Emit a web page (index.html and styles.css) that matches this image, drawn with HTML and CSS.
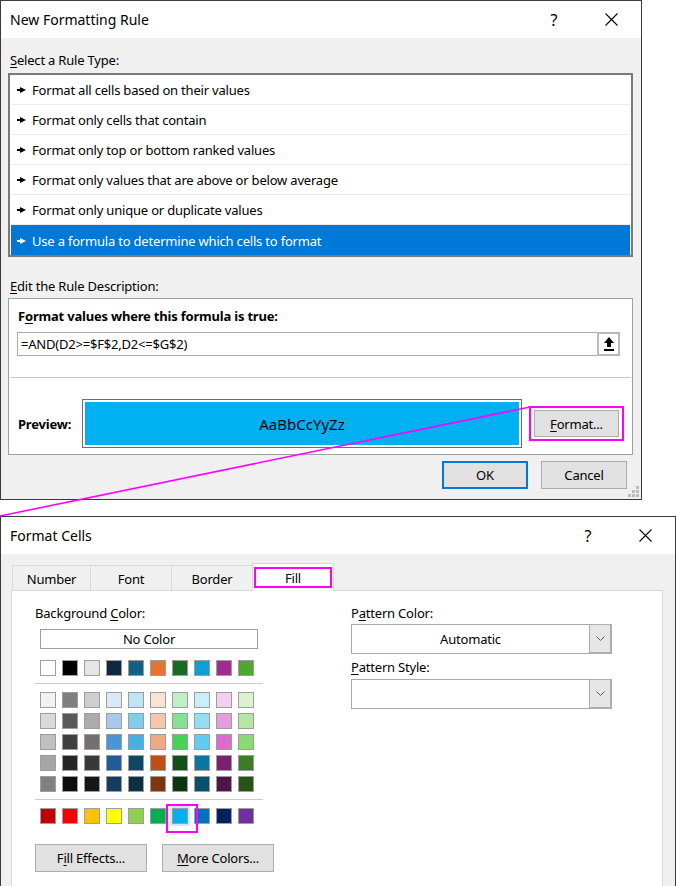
FILE: index.html
```html
<!DOCTYPE html>
<html lang="en">
<head>
<meta charset="utf-8">
<title>New Formatting Rule</title>
<link rel="stylesheet" href="styles.css">
</head>
<body>
<div class="page">
  <section class="dlg dlg-rule">
    <header class="titlebar">
      <span class="title">New Formatting Rule</span>
      <span class="tb-help">?</span>
      <span class="tb-close"><svg width="13" height="13" viewBox="0 0 13 13"><path d="M0.5 0.5L12.5 12.5M12.5 0.5L0.5 12.5" stroke="#000" stroke-width="1.1" fill="none"/></svg></span>
    </header>
    <div class="dlg-body">
      <div class="lbl"><u>S</u>elect a Rule Type:</div>
      <ul class="rule-list">
        <li class="rule"><svg class="arr" viewBox="0 0 9 6"><rect x="0" y="2" width="4" height="2"/><polygon points="3,0 9,3 3,6"/></svg><span>Format all cells based on their values</span></li>
        <li class="rule"><svg class="arr" viewBox="0 0 9 6"><rect x="0" y="2" width="4" height="2"/><polygon points="3,0 9,3 3,6"/></svg><span>Format only cells that contain</span></li>
        <li class="rule"><svg class="arr" viewBox="0 0 9 6"><rect x="0" y="2" width="4" height="2"/><polygon points="3,0 9,3 3,6"/></svg><span>Format only top or bottom ranked values</span></li>
        <li class="rule"><svg class="arr" viewBox="0 0 9 6"><rect x="0" y="2" width="4" height="2"/><polygon points="3,0 9,3 3,6"/></svg><span>Format only values that are above or below average</span></li>
        <li class="rule"><svg class="arr" viewBox="0 0 9 6"><rect x="0" y="2" width="4" height="2"/><polygon points="3,0 9,3 3,6"/></svg><span>Format only unique or duplicate values</span></li>
        <li class="rule sel"><svg class="arr" viewBox="0 0 9 6"><rect x="0" y="2" width="4" height="2"/><polygon points="3,0 9,3 3,6"/></svg><span>Use a formula to determine which cells to format</span></li>
      </ul>
      <div class="lbl lbl-edit"><u>E</u>dit the Rule Description:</div>
      <div class="desc">
        <div class="desc-head">F<u>o</u>rmat values where this formula is true:</div>
        <div class="formula">
          <span class="ftext">=AND(D2&gt;=$F$2,D2&lt;=$G$2)</span>
          <span class="collapse-btn"><svg width="10" height="14" viewBox="0 0 10 14"><polygon points="5,0 10,6 7,6 7,10 3,10 3,6 0,6"/><rect x="0" y="12" width="10" height="2"/></svg></span>
        </div>
        <div class="sep"></div>
        <div class="preview-row">
          <span class="preview-lbl">Preview:</span>
          <div class="preview-frame"><div class="preview-fill">AaBbCcYyZz</div></div>
          <div class="hl hl-format"><button class="btn btn-format"><u>F</u>ormat...</button></div>
        </div>
      </div>
      <div class="actions">
        <button class="btn btn-ok">OK</button>
        <button class="btn">Cancel</button>
      </div>
    </div>
    <span class="grip">
      <i class="d d1"></i><i class="d d2"></i><i class="d d3"></i><i class="d d4"></i><i class="d d5"></i><i class="d d6"></i>
    </span>
  </section>

  <section class="dlg dlg-cells">
    <header class="titlebar">
      <span class="title">Format Cells</span>
      <span class="tb-help">?</span>
      <span class="tb-close"><svg width="13" height="13" viewBox="0 0 13 13"><path d="M0.5 0.5L12.5 12.5M12.5 0.5L0.5 12.5" stroke="#000" stroke-width="1.1" fill="none"/></svg></span>
    </header>
    <div class="cells-body">
      <div class="tabs">
        <span class="tab tab-number">Number</span>
        <span class="tab">Font</span>
        <span class="tab">Border</span>
        <span class="tab tab-sel"><span class="tab-hl">Fill</span></span>
      </div>
      <div class="panel">
        <div class="col-left">
          <div class="lbl2">Background <u>C</u>olor:</div>
          <div class="nocolor">No Color</div>
          <div class="sw-row sw-first">
            <i class="sw" style="background:#ffffff"></i><i class="sw" style="background:#000000"></i><i class="sw" style="background:#e7e6e6"></i><i class="sw" style="background:#0e2841"></i><i class="sw" style="background:#156082"></i><i class="sw" style="background:#e97132"></i><i class="sw" style="background:#196b24"></i><i class="sw" style="background:#0f9ed5"></i><i class="sw" style="background:#a02b93"></i><i class="sw" style="background:#4ea72e"></i>
          </div>
          <div class="sw-sep"></div>
          <div class="sw-grid">
            <div class="sw-row">
              <i class="sw" style="background:#f2f2f2"></i><i class="sw" style="background:#7f7f7f"></i><i class="sw" style="background:#d0cece"></i><i class="sw" style="background:#dae9f8"></i><i class="sw" style="background:#c0e4f5"></i><i class="sw" style="background:#fbe2d5"></i><i class="sw" style="background:#c1f0c8"></i><i class="sw" style="background:#caeefb"></i><i class="sw" style="background:#f2ceef"></i><i class="sw" style="background:#daf2d0"></i>
            </div>
            <div class="sw-row">
              <i class="sw" style="background:#d9d9d9"></i><i class="sw" style="background:#595959"></i><i class="sw" style="background:#aeaaaa"></i><i class="sw" style="background:#a6c9ec"></i><i class="sw" style="background:#83cceb"></i><i class="sw" style="background:#f7c7ac"></i><i class="sw" style="background:#84e291"></i><i class="sw" style="background:#95dcf7"></i><i class="sw" style="background:#e59edd"></i><i class="sw" style="background:#b5e6a2"></i>
            </div>
            <div class="sw-row">
              <i class="sw" style="background:#bfbfbf"></i><i class="sw" style="background:#404040"></i><i class="sw" style="background:#747070"></i><i class="sw" style="background:#4d93d9"></i><i class="sw" style="background:#44b3e1"></i><i class="sw" style="background:#f1a983"></i><i class="sw" style="background:#47d359"></i><i class="sw" style="background:#61cbf3"></i><i class="sw" style="background:#d86dcd"></i><i class="sw" style="background:#8ed973"></i>
            </div>
            <div class="sw-row">
              <i class="sw" style="background:#a6a6a6"></i><i class="sw" style="background:#262626"></i><i class="sw" style="background:#3a3838"></i><i class="sw" style="background:#215c98"></i><i class="sw" style="background:#0f4761"></i><i class="sw" style="background:#c04f15"></i><i class="sw" style="background:#124f1a"></i><i class="sw" style="background:#0b76a0"></i><i class="sw" style="background:#782170"></i><i class="sw" style="background:#3b7d23"></i>
            </div>
            <div class="sw-row">
              <i class="sw" style="background:#808080"></i><i class="sw" style="background:#0d0d0d"></i><i class="sw" style="background:#161616"></i><i class="sw" style="background:#153d64"></i><i class="sw" style="background:#0a2f41"></i><i class="sw" style="background:#7e350e"></i><i class="sw" style="background:#0c3511"></i><i class="sw" style="background:#074f6a"></i><i class="sw" style="background:#501549"></i><i class="sw" style="background:#275317"></i>
            </div>
          </div>
          <div class="sw-sep sw-sep2"></div>
          <div class="sw-row sw-std">
            <i class="sw" style="background:#c00000"></i><i class="sw" style="background:#ff0000"></i><i class="sw" style="background:#ffc000"></i><i class="sw" style="background:#ffff00"></i><i class="sw" style="background:#92d050"></i><i class="sw" style="background:#00b050"></i><i class="sw sw-picked" style="background:#00b0f0"></i><i class="sw" style="background:#0070c0"></i><i class="sw" style="background:#002060"></i><i class="sw" style="background:#7030a0"></i>
          </div>
          <div class="fill-btns">
            <button class="btn btn-wide">F<u>i</u>ll Effects...</button>
            <button class="btn btn-wide"><u>M</u>ore Colors...</button>
          </div>
        </div>
        <div class="col-right">
          <div class="lbl2">P<u>a</u>ttern Color:</div>
          <div class="dropdown">
            <span class="dd-text">Automatic</span>
            <span class="dd-arrow"><svg width="9" height="5" viewBox="0 0 9 5"><path d="M0.5 0.5L4.5 4.5L8.5 0.5" stroke="#5a5a5a" fill="none"/></svg></span>
          </div>
          <div class="lbl2 lbl-style"><u>P</u>attern Style:</div>
          <div class="dropdown dropdown-2">
            <span class="dd-text"></span>
            <span class="dd-arrow"><svg width="9" height="5" viewBox="0 0 9 5"><path d="M0.5 0.5L4.5 4.5L8.5 0.5" stroke="#5a5a5a" fill="none"/></svg></span>
          </div>
        </div>
      </div>
    </div>
  </section>

  <svg class="connector" width="676" height="886" viewBox="0 0 676 886"><line x1="0" y1="516" x2="530" y2="407" stroke="#ff00ff" stroke-width="1.6"/></svg>
</div>
</body>
</html>
```

FILE: styles.css
```css
* { box-sizing: border-box; }
html, body { margin: 0; padding: 0; background: #fff; }
body {
  font-family: "Noto Sans", "Open Sans", sans-serif;
  font-size: 13px;
  letter-spacing: -0.2px;
  color: #000;
}
u { text-decoration: underline; text-underline-offset: 2px; }
.page { position: relative; width: 676px; height: 886px; overflow: hidden; }

.dlg {
  background: #f0f0f0;
  border: 1px solid #3a3a3a;
  display: flex;
  flex-direction: column;
}
.dlg-rule { width: 642px; height: 500px; position: relative; }
.dlg-cells { width: 676px; height: 370px; margin-top: 16px; border-bottom: none; }

.titlebar {
  height: 37px;
  flex: none;
  background: #fff;
  display: flex;
  align-items: center;
  padding-left: 9px;
}
.title { flex: 1; font-size: 14px; letter-spacing: 0; }
.tb-help { width: 30px; text-align: center; font-size: 16px; letter-spacing: 0; }
.tb-close { width: 46px; margin-left: 19px; margin-right: 7px; display: flex; justify-content: center; }

.dlg-body { flex: 1; padding-top: 12px; }
.lbl { height: 20px; line-height: 20px; padding-left: 9px; }
.lbl-edit { margin-top: 19px; }

.rule-list {
  list-style: none;
  margin: 3px 0 0 7px;
  padding: 0 1px;
  width: 625px;
  height: 184px;
  border: 2px solid #7a7a7a;
  background: #fff;
}
.rule {
  height: 30px;
  border-bottom: 1px solid #ececec;
  display: flex;
  align-items: center;
  padding-left: 6px;
  padding-top: 1px;
}
.rule .arr { width: 9px; height: 6px; margin-right: 6px; fill: #000; flex: none; }
.rule.sel { background: #0078d7; color: #fff; border-bottom: none; }
.rule.sel .arr { fill: #fff; }

.desc {
  margin: 2px 0 0 7px;
  width: 625px;
  height: 157px;
  border: 1px solid #a0a0a0;
  background: #fff;
}
.desc-head { margin-top: 7px; height: 20px; line-height: 20px; padding-left: 9px; font-weight: bold; }
.formula {
  margin: 6px 0 0 8px;
  width: 603px;
  height: 24px;
  border: 1px solid #ababab;
  display: flex;
  align-items: center;
}
.ftext { flex: 1; padding-left: 3px; }
.collapse-btn {
  width: 23px;
  height: 24px;
  margin: -1px -1px -1px 0;
  border: 2px solid #b9b9b9;
  background: #fff;
  display: flex;
  align-items: center;
  justify-content: center;
}
.sep { margin: 21px 1px 0; border-top: 1px solid #c8c8c8; }
.preview-row { margin-top: 21px; height: 49px; display: flex; align-items: center; padding-left: 9px; }
.preview-lbl { width: 64px; font-weight: bold; }
.preview-frame { width: 440px; height: 49px; border: 1px solid #6d6d6d; padding: 2px; background: #fff; }
.preview-fill {
  height: 100%;
  background: #00b0f0;
  display: flex;
  align-items: center;
  justify-content: center;
  font-size: 15px;
  letter-spacing: 0;
}
.hl { border: 2px solid #ff00ff; }
.hl-format { margin-left: 7px; padding: 2px 3px; }

.btn {
  font: inherit;
  letter-spacing: inherit;
  color: #000;
  background: #e1e1e1;
  border: 1px solid #adadad;
  height: 28px;
  width: 86px;
  padding: 0;
}
.btn-format { width: 85px; height: 27px; }
.btn-ok { border: 2px solid #0078d7; }
.actions { margin-top: 6px; display: flex; justify-content: flex-end; gap: 13px; padding-right: 14px; }

.grip { position: absolute; right: 2px; bottom: 2px; width: 11px; height: 11px; }
.grip .d { position: absolute; width: 3px; height: 3px; background: #bcbcbc; }
.grip .d1 { left: 8px; top: 0; }
.grip .d2 { left: 4px; top: 4px; }
.grip .d3 { left: 8px; top: 4px; }
.grip .d4 { left: 0; top: 8px; }
.grip .d5 { left: 4px; top: 8px; }
.grip .d6 { left: 8px; top: 8px; }

/* Format Cells */
.cells-body { flex: 1; display: flex; flex-direction: column; }
.tabs { height: 36px; display: flex; align-items: flex-end; padding-left: 11px; }
.tab {
  height: 25px;
  width: 82px;
  margin-left: -1px;
  border: 1px solid #d9d9d9;
  border-bottom: none;
  background: #f0f0f0;
  display: flex;
  align-items: center;
  justify-content: center;
  padding-top: 2px;
}
.tab-number { width: 79px; margin-left: 0; }
.tab-sel {
  height: 28px;
  margin-bottom: -1px;
  background: #fff;
  position: relative;
  z-index: 2;
  align-items: flex-start;
  padding-top: 0;
}
.tab-hl {
  margin: 3px 1px 0 1px;
  width: 78px;
  height: 21px;
  border: 2px solid #ff00ff;
  display: flex;
  align-items: center;
  justify-content: center;
}
.panel {
  flex: 1;
  margin-left: 10px;
  width: 652px;
  border: 1px solid #d9d9d9;
  border-bottom: none;
  background: #fff;
  display: flex;
  padding: 12px 0 0 23px;
}
.col-left { width: 316px; }
.col-right { width: 261px; }
.lbl2 { height: 20px; line-height: 20px; }
.nocolor {
  margin: 6px 0 0 5px;
  width: 218px;
  height: 20px;
  border: 1px solid #a0a0a0;
  text-align: center;
  line-height: 19px;
}
.sw-row { display: flex; gap: 6px; margin-left: 5px; }
.sw { display: block; width: 16px; height: 16px; border: 1px solid #9d9d9d; flex: none; }
.sw-first { margin-top: 11px; }
.sw-sep { width: 228px; margin-top: 7px; border-top: 1px solid #cbcbcb; }
.sw-grid { margin-top: 8px; display: flex; flex-direction: column; gap: 5px; }
.sw-std { margin-top: 8px; }
.sw-picked { position: relative; box-shadow: 0 0 0 2px #cfe8fb; }
.sw-picked::after {
  content: "";
  position: absolute;
  left: -7px;
  top: -5px;
  width: 28px;
  height: 25px;
  border: 2px solid #ff00ff;
}
.fill-btns { margin-top: 20px; display: flex; gap: 15px; }
.btn-wide { width: 112px; }

.dropdown {
  margin-top: 1px;
  width: 261px;
  height: 30px;
  border: 1px solid #a9a9a9;
  background: #fff;
  display: flex;
}
.dd-text { flex: 1; display: flex; align-items: center; justify-content: center; }
.dd-arrow {
  width: 23px;
  margin: -1px -1px -1px 0;
  background: #e6e6e6;
  border: 1px solid #adadad;
  border-right-width: 2px;
  border-bottom-width: 2px;
  display: flex;
  align-items: center;
  justify-content: center;
}
.lbl-style { margin-top: 3px; }
.dropdown-2 { margin-top: 2px; }

.connector { position: absolute; left: 0; top: 0; pointer-events: none; }
```
